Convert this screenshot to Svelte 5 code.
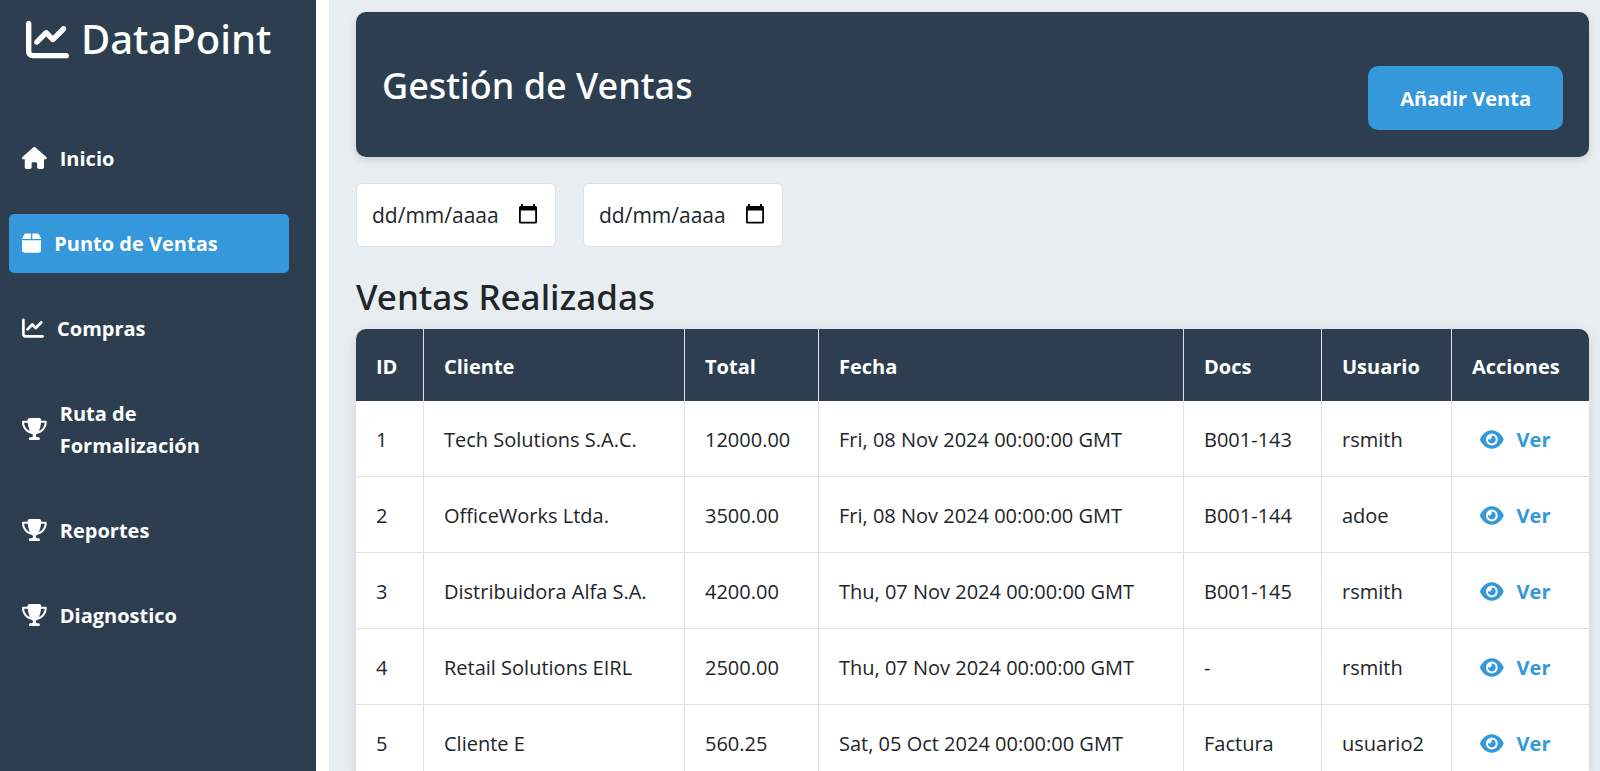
<script>
  const icons = {
    chart: {
      w: 512,
      d: 'M64 64c0-17.7-14.3-32-32-32S0 46.3 0 64V400c0 44.2 35.8 80 80 80H480c17.7 0 32-14.3 32-32s-14.3-32-32-32H80c-8.8 0-16-7.2-16-16V64zm406.6 86.6c12.5-12.5 12.5-32.8 0-45.3s-32.8-12.5-45.3 0L320 210.7l-57.4-57.4c-12.5-12.5-32.8-12.5-45.3 0l-112 112c-12.5 12.5-12.5 32.8 0 45.3s32.8 12.5 45.3 0L240 221.3l57.4 57.4c12.5 12.5 32.8 12.5 45.3 0l128-128z'
    },
    home: {
      w: 576,
      d: 'M575.8 255.5c0 18-15 32.1-32 32.1h-32l.7 160.2c0 2.7-.2 5.4-.5 8.1V472c0 22.1-17.9 40-40 40H456c-1.1 0-2.2 0-3.3-.1c-1.4 .1-2.8 .1-4.2 .1H416 392c-22.1 0-40-17.9-40-40V448 384c0-17.7-14.3-32-32-32H256c-17.7 0-32 14.3-32 32v64 24c0 22.1-17.9 40-40 40H160 128.1c-1.5 0-3-.1-4.5-.2c-1.2 .1-2.4 .2-3.6 .2H104c-22.1 0-40-17.9-40-40V360c0-.9 0-1.9 .1-2.8V287.6H32c-18 0-32-14-32-32.1c0-9 3-17 10-24L266.4 8c7-7 15-8 22-8s15 2 21 7L564.8 231.5c8 7 12 15 11 24z'
    },
    box: {
      w: 448,
      d: 'M50.7 58.5L0 160H208V32H93.7C75.5 32 58.9 42.3 50.7 58.5zM240 160H448L397.3 58.5C389.1 42.3 372.5 32 354.3 32H240V160zm208 32H0V416c0 35.3 28.7 64 64 64H384c35.3 0 64-28.7 64-64V192z'
    },
    trophy: {
      w: 576,
      d: 'M400 0H176c-26.5 0-48.1 21.8-47.1 48.2c.2 5.3 .4 10.6 .7 15.8H24C10.7 64 0 74.7 0 88c0 92.6 33.5 157 78.5 200.7c44.3 43.1 98.3 64.8 138.1 75.8c23.4 6.5 39.4 26 39.4 45.6c0 20.9-17 37.9-37.9 37.9H192c-17.7 0-32 14.3-32 32s14.3 32 32 32H384c17.7 0 32-14.3 32-32s-14.3-32-32-32H357.9C337 448 320 431 320 410.1c0-19.6 15.9-39.2 39.4-45.6c39.9-11 93.9-32.7 138.2-75.8C542.5 245 576 180.6 576 88c0-13.3-10.7-24-24-24H446.4c.3-5.2 .5-10.4 .7-15.8C448.1 21.8 426.5 0 400 0zM48.9 112h84.4c9.1 90.1 29.2 150.3 51.9 190.6c-24.9-11-50.8-26.5-73.2-48.3c-32-31.1-58-76-63-142.3zM464.1 254.3c-22.4 21.8-48.3 37.3-73.2 48.3c22.7-40.3 42.8-100.5 51.9-190.6h84.4c-5.1 66.3-31.1 111.2-63 142.3z'
    },
    eye: {
      w: 576,
      d: 'M288 32c-80.8 0-145.5 36.8-192.6 80.6C48.6 156 17.3 208 2.5 243.7c-3.3 7.9-3.3 16.7 0 24.6C17.3 304 48.6 356 95.4 399.4C142.5 443.2 207.2 480 288 480s145.5-36.8 192.6-80.6c46.8-43.5 78.1-95.4 93-131.1c3.3-7.9 3.3-16.7 0-24.6c-14.9-35.7-46.2-87.7-93-131.1C433.5 68.8 368.8 32 288 32zM144 256a144 144 0 1 1 288 0 144 144 0 1 1 -288 0zm144-64c0 35.3-28.7 64-64 64c-7.1 0-13.9-1.2-20.3-3.3c-5.5-1.8-11.9 1.6-11.7 7.4c.3 6.9 1.3 13.8 3.2 20.7c13.7 51.2 66.4 81.6 117.6 67.9s81.6-66.4 67.9-117.6c-11.1-41.5-47.8-69.4-88.6-71.1c-5.8-.2-9.2 6.1-7.4 11.7c2.1 6.4 3.3 13.2 3.3 20.3z'
    }
  };

  const nav = [
    { label: 'Inicio', icon: 'home' },
    { label: 'Punto de Ventas', icon: 'box', active: true },
    { label: 'Compras', icon: 'chart' },
    { label: 'Ruta de Formalización', icon: 'trophy' },
    { label: 'Reportes', icon: 'trophy' },
    { label: 'Diagnostico', icon: 'trophy' }
  ];

  const columns = [
    { name: 'ID', width: 68 },
    { name: 'Cliente', width: 261 },
    { name: 'Total', width: 134 },
    { name: 'Fecha', width: 365 },
    { name: 'Docs', width: 138 },
    { name: 'Usuario', width: 130 },
    { name: 'Acciones', width: 137 }
  ];
  const totalWidth = columns.reduce((sum, c) => sum + c.width, 0);

  const sales = [
    ['1', 'Tech Solutions S.A.C.', '12000.00', 'Fri, 08 Nov 2024 00:00:00 GMT', 'B001-143', 'rsmith'],
    ['2', 'OfficeWorks Ltda.', '3500.00', 'Fri, 08 Nov 2024 00:00:00 GMT', 'B001-144', 'adoe'],
    ['3', 'Distribuidora Alfa S.A.', '4200.00', 'Thu, 07 Nov 2024 00:00:00 GMT', 'B001-145', 'rsmith'],
    ['4', 'Retail Solutions EIRL', '2500.00', 'Thu, 07 Nov 2024 00:00:00 GMT', '-', 'rsmith'],
    ['5', 'Cliente E', '560.25', 'Sat, 05 Oct 2024 00:00:00 GMT', 'Factura', 'usuario2']
  ];

  let range = $state({ from: '', to: '' });
</script>

{#snippet icon(name)}
  <svg class="icon" viewBox="0 0 {icons[name].w} 512" aria-hidden="true"><path d={icons[name].d} /></svg>
{/snippet}

{#snippet dateField(key, label)}
  <div class="date">
    <input type="text" inputmode="numeric" placeholder="dd/mm/aaaa" aria-label={label} bind:value={range[key]} />
    <button type="button" aria-label="Abrir calendario">
      <svg viewBox="0 0 20 20" aria-hidden="true">
        <path fill-rule="evenodd" d="M3 0h2v2h10V0h2v2h.5A1.5 1.5 0 0 1 19 3.500V18a1.500 1.500 0 0 1-1.500 1.500h-15A1.500 1.500 0 0 1 1 18V3.500A1.500 1.500 0 0 1 2.500 2H3zM2.800 6.500v11.200h14.400V6.500z" />
      </svg>
    </button>
  </div>
{/snippet}

<div class="shell">
  <aside>
    <div class="brand">{@render icon('chart')}<span>DataPoint</span></div>
    <nav>
      {#each nav as item}
        <a href="#top" class:active={item.active} aria-current={item.active ? 'page' : undefined}>
          {@render icon(item.icon)}<span>{item.label}</span>
        </a>
      {/each}
    </nav>
  </aside>

  <main>
    <header>
      <h1>Gestión de Ventas</h1>
      <button type="button" class="add">Añadir Venta</button>
    </header>

    <div class="filters">
      {@render dateField('from', 'Fecha inicial')}
      {@render dateField('to', 'Fecha final')}
    </div>

    <h2>Ventas Realizadas</h2>
    <div class="card">
      <table>
        <colgroup>
          {#each columns as c}<col style="width: {(c.width / totalWidth) * 100}%" />{/each}
        </colgroup>
        <thead>
          <tr>{#each columns as c}<th scope="col">{c.name}</th>{/each}</tr>
        </thead>
        <tbody>
          {#each sales as row}
            <tr>
              {#each row as cell}<td>{cell}</td>{/each}
              <td><button type="button" class="view">{@render icon('eye')}<span>Ver</span></button></td>
            </tr>
          {/each}
        </tbody>
      </table>
    </div>
  </main>
</div>

<style>
  :global(body) {
    background: #fff;
  }

  .shell {
    display: flex;
    gap: 13px;
    height: 100vh;
    overflow: hidden;
    font-family: 'Open Sans', 'Noto Sans', sans-serif;
    font-size: 20px;
    line-height: 32px;
    color: #212529;
  }

  .shell * {
    box-sizing: border-box;
  }

  button,
  input {
    font: inherit;
  }

  .icon {
    height: 21px;
    flex: none;
    fill: currentColor;
  }

  aside {
    flex: none;
    width: 316px;
    background: #2d3e50;
    color: #fff;
  }

  .brand {
    display: flex;
    align-items: center;
    gap: 12px;
    padding: 13px 26px 0;
    font-family: 'Noto Sans', 'Open Sans', sans-serif;
    font-size: 40px;
    line-height: 52px;
    font-weight: 500;
  }

  .brand .icon {
    height: 43px;
  }

  nav {
    display: flex;
    flex-direction: column;
    gap: 26px;
    padding: 64px 27px 0 9px;
  }

  nav a {
    display: flex;
    align-items: center;
    gap: 13px;
    padding: 14px 80px 13px 13px;
    border-radius: 5px;
    color: #fff;
    font-weight: 700;
    text-decoration: none;
  }

  nav .icon {
    height: 22px;
    margin-bottom: 2px;
  }

  nav a.active {
    padding-right: 13px;
    background: #3498db;
  }

  main {
    flex: 1;
    min-width: 0;
    padding: 12px 11px 27px 27px;
    background: #e8edf1;
    overflow: auto;
    scrollbar-width: none;
  }

  header {
    display: flex;
    align-items: center;
    justify-content: space-between;
    padding: 27px 26px;
    border-radius: 10px;
    background: #2d3e50;
    box-shadow: 0 3px 8px rgba(0, 0, 0, 0.12);
  }

  h1,
  h2 {
    margin: 0;
    font-family: 'Noto Sans', 'Open Sans', sans-serif;
    font-size: 35px;
    line-height: 44px;
    font-weight: 500;
  }

  h1 {
    padding-top: 2px;
    font-size: 36px;
    color: #fff;
  }

  .add {
    margin-top: 27px;
    padding: 17px 32px 15px;
    border: 0;
    border-radius: 10px;
    background: #3498db;
    color: #fff;
    font-weight: 700;
  }

  .filters {
    display: flex;
    gap: 27px;
    margin: 26px 0 28px;
  }

  .date {
    display: flex;
    align-items: center;
    width: 200px;
    padding: 15px;
    border: 1px solid #dee2e6;
    border-radius: 6px;
    background: #fff;
  }

  .date input {
    flex: 1;
    min-width: 0;
    padding: 0;
    border: 0;
    background: none;
    color: #212529;
    font-size: 21px;
  }

  .date input::placeholder {
    color: #212529;
    opacity: 1;
  }

  .date button {
    display: flex;
    padding: 0 2px 3px;
    border: 0;
    background: none;
    color: #000;
  }

  .date svg {
    width: 20px;
    height: 20px;
    fill: currentColor;
  }

  .card {
    margin-top: 10px;
    border-radius: 10px;
    background: #fff;
    box-shadow: 0 3px 12px rgba(0, 0, 0, 0.12);
    overflow: hidden;
  }

  table {
    width: 100%;
    border-collapse: separate;
    border-spacing: 0;
    table-layout: fixed;
  }

  th,
  td {
    padding: 0 20px;
    border-right: 1px solid #dee2e6;
    text-align: left;
    white-space: nowrap;
  }

  th:last-child,
  td:last-child {
    border-right: 0;
  }

  th {
    height: 72px;
    padding-top: 4px;
    background: #2d3e50;
    color: #fff;
    font-weight: 700;
  }

  td {
    height: 76px;
    padding-top: 2px;
    border-bottom: 1px solid #dee2e6;
  }

  .view {
    display: flex;
    align-items: center;
    gap: 13px;
    padding: 0 8px;
    border: 0;
    background: none;
    color: #3498db;
    font-weight: 700;
  }
</style>
